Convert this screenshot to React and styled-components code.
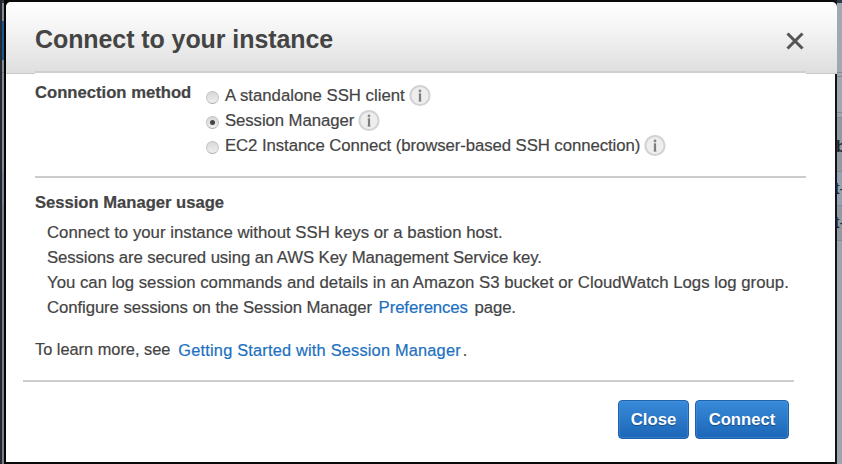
import React from "react";
import styled, { createGlobalStyle } from "styled-components";

const GlobalStyle = createGlobalStyle`
  * { box-sizing: border-box; }
  body { margin: 0; overflow: hidden; background: #fff; }
  p, h1, h2 { margin: 0; font-size: inherit; }
`;

const Screen = styled.div`
  display: grid;
  grid-template-columns: 6px 829px 7px;
  width: 842px;
  height: 464px;
  overflow: hidden;
  background: #0a0a0b;
  color: #444;
  font-family: "Liberation Sans", Arial, sans-serif;
  font-size: 16.75px;
  line-height: 25px;
`;

const LeftEdge = styled.div`
  display: grid;
  grid-template-columns: 2px 2px 2px;
  background: #050506;
`;

const NavEdge = styled.div`
  background: #25292d;
`;

const PageSliver = styled.div`
  background: linear-gradient(
    #2c3a49 0 3px, #858d96 3px 21px, #1c5592 21px 60px, #858c95 60px 72px,
    #707780 72px 73px, #858c95 73px 171px, #778593 171px 205px, #777e88 205px
  );
`;

const RightEdge = styled.div`
  padding: 134px 0 0 2px;
  background:
    linear-gradient(90deg, #111316 0 2px, transparent 2px),
    linear-gradient(
      #2c3a49 0 3px, #a2a8b2 3px 72px, #858b94 72px 73px, #a2a8b2 73px 76px,
      #858b94 76px 77px, #a0a7b0 77px 112px, #858b94 112px 113px,
      #a0a7b0 113px 117px, #858b94 117px 118px, #9299a3 118px 171px,
      #858b94 171px 172px, #94a2b1 172px 205px, #858b94 205px 206px,
      #9299a3 206px 240px, #858b94 240px 241px, #9ea4ae 241px
    );
`;

const CellText = styled.div`
  height: ${(p) => p.$height}px;
  margin-left: ${(p) => p.$shift}px;
  color: #20242b;
  font-size: 16px;
  font-weight: ${(p) => (p.$bold ? 700 : 400)};
  white-space: nowrap;
`;

const Dialog = styled.section`
  z-index: 1;
  display: flex;
  flex-direction: column;
  height: 460px;
  margin-top: 2px;
  border-radius: 5px 5px 0 0;
  background: #fff;
`;

const DialogHeader = styled.header`
  display: flex;
  align-items: center;
  justify-content: space-between;
  flex: none;
  height: 72px;
  margin-right: -2px;
  padding: 1px 33px 0 29px;
  border-bottom: 1px solid #c9c9c9;
  border-radius: 5px 5px 0 0;
  background: linear-gradient(#fff, #f4f4f4 40%, #dedede);
`;

const Title = styled.h1`
  padding-top: 2px;
  font-size: 25px;
  letter-spacing: -0.08px;
  line-height: 30px;
  white-space: nowrap;
`;

const CloseIconButton = styled.button`
  display: flex;
  padding: 6px 0 0;
  border: 0;
  background: none;
`;

const DialogBody = styled.div`
  height: 309px;
  margin: -3px 29px 0 29px;
  -webkit-text-stroke: 0.2px #444;
`;

const MethodSection = styled.div`
  display: flex;
  height: 107px;
  padding-top: 10px;
  border-top: 2px solid #cfcfcf;
  border-bottom: 2px solid #ccc;
  background: #fff;
`;

const MethodLabel = styled.h2`
  width: 171px;
  padding-top: 3px;
  font-size: 16.65px;
  line-height: 14px;
  white-space: nowrap;
`;

const Options = styled.div`
  display: flex;
  flex-direction: column;
`;

const Option = styled.label`
  display: flex;
  align-items: center;
  height: 25px;
  letter-spacing: ${(p) => p.$tracking || 0}px;
  white-space: nowrap;
`;

const Radio = styled.span`
  display: grid;
  place-items: center;
  width: 13px;
  height: 13px;
  margin: 3px 6px 0 0;
  border: 1px solid #c3c3c3;
  border-bottom-color: #aaa;
  border-radius: 50%;
  background: linear-gradient(#d8d8d8, #eee);

  &::after {
    content: "";
    width: 5px;
    height: 5px;
    border-radius: 50%;
    background: ${(p) => (p.$checked ? "#444" : "transparent")};
  }
`;

const InfoBadge = styled.span`
  display: flex;
  margin-left: 4px;
`;

const UsageHeading = styled.h2`
  padding-top: 12px;
  font-size: 16.6px;
  white-space: nowrap;
`;

const UsageLines = styled.div`
  padding: 5px 0 0 12px;
`;

const UsageLine = styled.p`
  letter-spacing: ${(p) => p.$tracking || 0}px;
  white-space: nowrap;
`;

const TextLink = styled.a`
  margin: 0 2px;
  color: #2070c0;
  -webkit-text-stroke-color: #2070c0;
`;

const LearnMore = styled.p`
  display: flex;
  margin-top: 17px;
  font-size: 16.35px;
  line-height: 24px;
  white-space: nowrap;
`;

const GuideLink = styled.span`
  padding: 1px 0 0 6px;
  letter-spacing: 0.2px;
`;

const DialogFooter = styled.footer`
  display: flex;
  justify-content: flex-end;
  gap: 6px;
  margin: 0 41px 0 17px;
  padding: 18px 5px 0 0;
  border-top: 2px solid #cdcdcd;
`;

const ActionButton = styled.button`
  width: ${(p) => p.$width}px;
  height: 39px;
  padding: 0;
  border: 1px solid #1c62af;
  border-radius: 4px;
  background: linear-gradient(#398ada, #2b78c8 50%, #1c67b7);
  box-shadow: inset 0 0 0 1px rgba(90, 155, 220, 0.35);
  color: #fff;
  font: bold 16.7px "Liberation Sans", Arial, sans-serif;
  text-shadow: 0 1px 1px #124b89;
`;

function InfoIcon() {
  return (
    <InfoBadge>
      <svg width="22" height="24" viewBox="0 0 22 24">
        <circle cx="11" cy="11.5" r="9.6" fill="#eee" stroke="#d2d2d2" strokeWidth="2" />
        <circle cx="11" cy="7" r="1.4" fill="#888" />
        <path d="M9.5 10H12M9.5 17H12.8" fill="none" stroke="#b5b5b5" strokeWidth="1.2" />
        <path d="M11 9.5V17.5" fill="none" stroke="#7d7d7d" strokeWidth="2.2" />
      </svg>
    </InfoBadge>
  );
}

const methods = [
  { name: "A standalone SSH client", tracking: 0 },
  { name: "Session Manager", checked: true, tracking: -0.08 },
  { name: "EC2 Instance Connect (browser-based SSH connection)", tracking: -0.075 },
];

export default function App() {
  return (
    <Screen>
      <GlobalStyle />
      <LeftEdge>
        <NavEdge />
        <PageSliver />
      </LeftEdge>
      <Dialog role="dialog">
        <DialogHeader>
          <Title>Connect to your instance</Title>
          <CloseIconButton aria-label="Close dialog">
            <svg width="18" height="18" viewBox="0 0 18 18">
              <path d="M1.5 1.5L16.5 16.5M16.5 1.5L1.5 16.5" stroke="#555" strokeWidth="3" />
            </svg>
          </CloseIconButton>
        </DialogHeader>
        <DialogBody>
          <MethodSection>
            <MethodLabel>Connection method</MethodLabel>
            <Options>
              {methods.map((m) => (
                <Option key={m.name} $tracking={m.tracking}>
                  <Radio $checked={m.checked} />
                  {m.name}
                  <InfoIcon />
                </Option>
              ))}
            </Options>
          </MethodSection>
          <UsageHeading>Session Manager usage</UsageHeading>
          <UsageLines>
            <UsageLine $tracking={0.02}>Connect to your instance without SSH keys or a bastion host.</UsageLine>
            <UsageLine $tracking={-0.1}>Sessions are secured using an AWS Key Management Service key.</UsageLine>
            <UsageLine $tracking={0.01}>
              You can log session commands and details in an Amazon S3 bucket or CloudWatch Logs log group.
            </UsageLine>
            <UsageLine $tracking={-0.09}>
              Configure sessions on the Session Manager <TextLink>Preferences</TextLink> page.
            </UsageLine>
          </UsageLines>
          <LearnMore>
            To learn more, see
            <GuideLink>
              <TextLink>Getting Started with Session Manager</TextLink>.
            </GuideLink>
          </LearnMore>
        </DialogBody>
        <DialogFooter>
          <ActionButton $width={71}>Close</ActionButton>
          <ActionButton $width={94}>Connect</ActionButton>
        </DialogFooter>
      </Dialog>
      <RightEdge>
        <CellText $bold $height={42} $shift={-1}>b</CellText>
        <CellText $height={34} $shift={-2}>t-</CellText>
        <CellText $height={34} $shift={-2}>t-</CellText>
      </RightEdge>
    </Screen>
  );
}
